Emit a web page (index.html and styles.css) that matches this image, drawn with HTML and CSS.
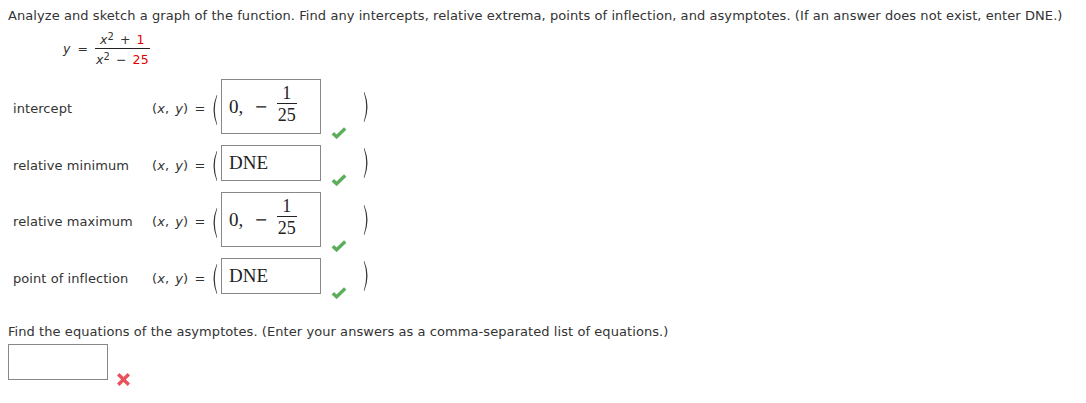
FILE: index.html
```html
<!DOCTYPE html>
<html>
<head>
<meta charset="utf-8">
<link rel="stylesheet" href="styles.css">
</head>
<body>
<p class="prompt">Analyze and sketch a graph of the function. Find any intercepts, relative extrema, points of inflection, and asymptotes. (If an answer does not exist, enter DNE.)</p>
<div class="formula">
  <span class="lhs"><i>y</i> =</span>
  <span class="frac">
    <span class="num"><i>x</i><sup>2</sup> + <span class="red">1</span></span>
    <span class="den"><i>x</i><sup>2</sup> &minus; <span class="red">25</span></span>
  </span>
</div>

<div class="rows">
  <div class="row">
    <span class="label">intercept</span>
    <span class="xy">(<i>x</i>, <i>y</i>) =</span>
    <svg class="paren" viewBox="0 0 7 30" width="7" height="30"><path d="M5.6 0.3 Q-0.6 15 5.6 29.7 L6.2 29.7 Q1.4 15 6.2 0.3 Z"/></svg>
    <div class="box tall">
      <span class="m">0,</span><span class="minus">&minus;</span>
      <span class="mfrac"><span class="mnum">1</span><span class="mden">25</span></span>
    </div>
    <svg class="check" viewBox="0 0 16 12" width="16" height="12"><path d="M1.8 6.2 L5.6 9.8 L14.2 1.6"/></svg>
    <svg class="paren close" viewBox="0 0 7 30" width="7" height="30"><path d="M1.4 0.3 Q7.6 15 1.4 29.7 L0.8 29.7 Q5.6 15 0.8 0.3 Z"/></svg>
  </div>

  <div class="row">
    <span class="label">relative minimum</span>
    <span class="xy">(<i>x</i>, <i>y</i>) =</span>
    <svg class="paren" viewBox="0 0 7 30" width="7" height="30"><path d="M5.6 0.3 Q-0.6 15 5.6 29.7 L6.2 29.7 Q1.4 15 6.2 0.3 Z"/></svg>
    <div class="box"><span class="m">DNE</span></div>
    <svg class="check" viewBox="0 0 16 12" width="16" height="12"><path d="M1.8 6.2 L5.6 9.8 L14.2 1.6"/></svg>
    <svg class="paren close" viewBox="0 0 7 30" width="7" height="30"><path d="M1.4 0.3 Q7.6 15 1.4 29.7 L0.8 29.7 Q5.6 15 0.8 0.3 Z"/></svg>
  </div>

  <div class="row">
    <span class="label">relative maximum</span>
    <span class="xy">(<i>x</i>, <i>y</i>) =</span>
    <svg class="paren" viewBox="0 0 7 30" width="7" height="30"><path d="M5.6 0.3 Q-0.6 15 5.6 29.7 L6.2 29.7 Q1.4 15 6.2 0.3 Z"/></svg>
    <div class="box tall">
      <span class="m">0,</span><span class="minus">&minus;</span>
      <span class="mfrac"><span class="mnum">1</span><span class="mden">25</span></span>
    </div>
    <svg class="check" viewBox="0 0 16 12" width="16" height="12"><path d="M1.8 6.2 L5.6 9.8 L14.2 1.6"/></svg>
    <svg class="paren close" viewBox="0 0 7 30" width="7" height="30"><path d="M1.4 0.3 Q7.6 15 1.4 29.7 L0.8 29.7 Q5.6 15 0.8 0.3 Z"/></svg>
  </div>

  <div class="row">
    <span class="label">point of inflection</span>
    <span class="xy">(<i>x</i>, <i>y</i>) =</span>
    <svg class="paren" viewBox="0 0 7 30" width="7" height="30"><path d="M5.6 0.3 Q-0.6 15 5.6 29.7 L6.2 29.7 Q1.4 15 6.2 0.3 Z"/></svg>
    <div class="box"><span class="m">DNE</span></div>
    <svg class="check" viewBox="0 0 16 12" width="16" height="12"><path d="M1.8 6.2 L5.6 9.8 L14.2 1.6"/></svg>
    <svg class="paren close" viewBox="0 0 7 30" width="7" height="30"><path d="M1.4 0.3 Q7.6 15 1.4 29.7 L0.8 29.7 Q5.6 15 0.8 0.3 Z"/></svg>
  </div>
</div>

<p class="prompt asym">Find the equations of the asymptotes. (Enter your answers as a comma-separated list of equations.)</p>
<div class="answer">
  <div class="box empty"></div>
  <svg class="cross" viewBox="0 0 13 13" width="13" height="13"><polygon points="0,2.4 2.4,0 6.5,4.1 10.6,0 13,2.4 8.9,6.5 13,10.6 10.6,13 6.5,8.9 2.4,13 0,10.6 4.1,6.5"/></svg>
</div>
</body>
</html>
```

FILE: styles.css
```css
body {
  margin: 8px;
  background: #fff;
  color: #333;
  font-family: "DejaVu Sans", Verdana, sans-serif;
  font-size: 13px;
  letter-spacing: 0.07px;
}

.prompt {
  margin: 0;
  line-height: 16px;
}

.formula {
  display: flex;
  align-items: center;
  padding-left: 55px;
  margin-top: 9px;
  font-size: 12.5px;
}

.formula .lhs {
  margin-right: 6px;
  margin-top: -3px;
  word-spacing: 3px;
}

.frac {
  display: inline-flex;
  flex-direction: column;
  align-items: center;
  word-spacing: 2px;
}

.frac .num {
  padding: 0 5px 2px;
  border-bottom: 1px solid #222;
  line-height: 13px;
}

.frac .den {
  padding: 4px 2px 0;
  line-height: 13px;
}

.frac sup {
  font-size: 10px;
  line-height: 0;
  vertical-align: 4px;
}

.red {
  color: #e00000;
}

.rows {
  display: flex;
  flex-direction: column;
  gap: 11px;
  margin-top: 13px;
}

.row {
  display: flex;
  align-items: center;
  padding-left: 5px;
}

.label {
  width: 139px;
  padding-top: 4px;
}

.xy {
  width: 59px;
  padding-top: 4px;
  word-spacing: 2px;
}

.paren {
  fill: #333;
  margin-top: 6px;
}

.paren.close {
  margin-left: 16px;
  margin-top: 0;
}

.box {
  box-sizing: border-box;
  width: 100px;
  height: 36px;
  margin-left: 3px;
  border: 1px solid #888;
  display: flex;
  align-items: center;
  padding: 0 7px;
  font-family: "Liberation Serif", "DejaVu Serif", serif;
  color: #222;
  font-size: 19px;
  letter-spacing: 0;
}

.box.tall {
  height: 55px;
}

.box .m {
  line-height: 20px;
}

.minus {
  margin: 0 9px 0 11px;
  font-family: "DejaVu Serif", serif;
  font-size: 16px;
}

.mfrac {
  display: inline-flex;
  flex-direction: column;
  align-items: center;
  font-size: 18px;
  line-height: 16px;
  margin-top: -6px;
}

.mnum {
  padding: 0 1px 2px;
  border-bottom: 1px solid #222;
  align-self: stretch;
  text-align: center;
}

.mden {
  padding: 3px 1px 0;
}

.check {
  align-self: flex-end;
  margin: 0 0 -5px 10px;
  fill: none;
  stroke: #5cae5c;
  stroke-width: 3.4;
  stroke-linecap: butt;
}

.asym {
  margin-top: 30px;
}

.answer {
  display: flex;
  align-items: flex-start;
  margin-top: 4px;
}

.box.empty {
  margin-left: 0;
}

.cross {
  display: block;
  flex: none;
  margin: 29px 0 0 9px;
  fill: #e8525a;
}
```
